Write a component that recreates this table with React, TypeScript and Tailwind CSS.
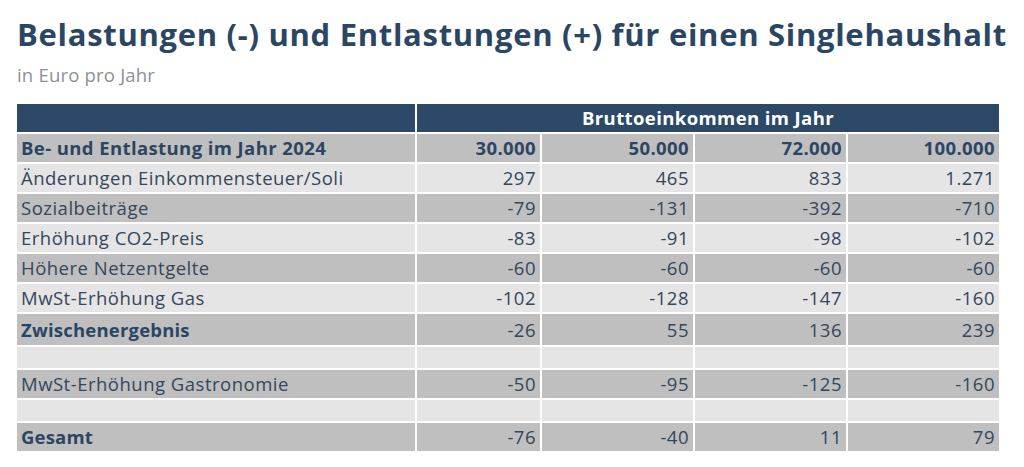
const rows = [
  { label: 'Änderungen Einkommensteuer/Soli', values: ['297', '465', '833', '1.271'], h: 'h-[28px]' },
  { label: 'Sozialbeiträge', values: ['-79', '-131', '-392', '-710'], h: 'h-[28px]' },
  { label: 'Erhöhung CO2-Preis', values: ['-83', '-91', '-98', '-102'], h: 'h-[28px]' },
  { label: 'Höhere Netzentgelte', values: ['-60', '-60', '-60', '-60'], h: 'h-[28px]' },
  { label: 'MwSt-Erhöhung Gas', values: ['-102', '-128', '-147', '-160'], h: 'h-[28px]' },
  { label: 'Zwischenergebnis', values: ['-26', '55', '136', '239'], h: 'h-[31px]', bold: true },
  { label: '', values: ['', '', '', ''], h: 'h-[21px]' },
  { label: 'MwSt-Erhöhung Gastronomie', values: ['-50', '-95', '-125', '-160'], h: 'h-[28px]' },
  { label: '', values: ['', '', '', ''], h: 'h-[21px]' },
  { label: 'Gesamt', values: ['-76', '-40', '11', '79'], h: 'h-[28px]', bold: true },
];

const App = () => {
  return (
    <div className="w-[1024px] h-[467px] bg-white pl-[17px] pt-[16px] font-['Open_Sans',sans-serif] overflow-hidden">
      <h1 className="text-[31px] leading-[36px] tracking-[0.7px] font-bold text-[#2b4663] whitespace-nowrap">
        Belastungen (-) und Entlastungen (+) für einen Singlehaushalt
      </h1>
      <p className="mt-[13px] text-[18.5px] leading-[20px] tracking-[0.2px] text-[#8b9198]">in Euro pro Jahr</p>

      {/* Table */}
      <div className="mt-[19px] grid grid-cols-[398px_123px_151px_151px_151px] gap-x-[2px] gap-y-[2px] text-[18.5px] tracking-[0.5px] text-[#34475b]">
        <div className="h-[28px] bg-[#2c4a68]"></div>
        <div className="col-span-4 h-[28px] bg-[#2c4a68] flex items-center justify-center text-white font-bold tracking-[0.4px]">
          Bruttoeinkommen im Jahr
        </div>

        <div className="h-[28px] bg-[#bfbfbf] flex items-center pl-1 font-bold tracking-[0.4px] text-[#2b4663] whitespace-nowrap">
          Be- und Entlastung im Jahr 2024
        </div>
        {['30.000', '50.000', '72.000', '100.000'].map((v) => (
          <div key={v} className="h-[28px] bg-[#bfbfbf] flex items-center justify-end pr-1 font-bold tracking-[0.4px] text-[#2b4663]">
            {v}
          </div>
        ))}

        {rows.map((r, i) => {
          const bg = i % 2 === 0 ? 'bg-[#e5e5e5]' : 'bg-[#bfbfbf]';
          return [
            <div
              key={`l${i}`}
              className={`${r.h} ${bg} flex items-center pl-1 whitespace-nowrap ${r.bold ? 'font-bold tracking-[0.2px] text-[#2b4663]' : ''}`}
            >
              {r.label}
            </div>,
            ...r.values.map((v, j) => (
              <div key={`v${i}-${j}`} className={`${r.h} ${bg} flex items-center justify-end pr-1`}>
                {v}
              </div>
            )),
          ];
        })}
      </div>
    </div>
  );
};

export default App;
